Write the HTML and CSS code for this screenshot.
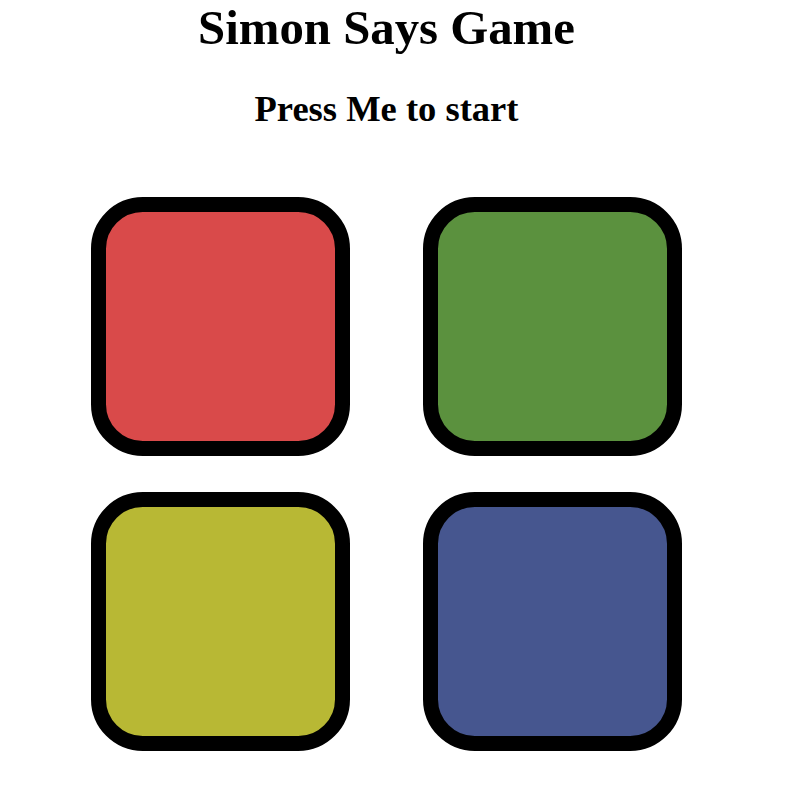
FILE: index.html
```html
<!DOCTYPE html>
<html>
<head>
<meta charset="utf-8">
<title>Simon Says Game</title>
<link rel="stylesheet" href="styles.css">
</head>
<body>
<div class="page">
  <h1 class="title">Simon Says Game</h1>
  <h2 class="status">Press Me to start</h2>
  <div class="board">
    <div class="btn red"></div>
    <div class="btn green"></div>
    <div class="btn yellow"></div>
    <div class="btn blue"></div>
  </div>
</div>
</body>
</html>
```

FILE: styles.css
```css
html, body {
  margin: 0;
  padding: 0;
  background: #fff;
}
.page {
  width: 773px;
  text-align: center;
  font-family: "Liberation Serif", "Times New Roman", serif;
  color: #000;
}
.title {
  margin: 0;
  font-size: 48.8px;
  font-weight: bold;
  line-height: 56px;
}
.status {
  margin: 32px 0 0 0;
  font-size: 36.5px;
  font-weight: bold;
  line-height: 42px;
}
.board {
  display: grid;
  grid-template-columns: 259px 259px;
  column-gap: 73px;
  row-gap: 36px;
  justify-content: center;
  margin-top: 67px;
}
.btn {
  box-sizing: border-box;
  width: 259px;
  height: 259px;
  border: 15px solid #000;
  border-radius: 20%;
}
.red { background: #d94a4a; }
.green { background: #5b913e; }
.yellow { background: #b8b834; }
.blue { background: #46568f; }
```
